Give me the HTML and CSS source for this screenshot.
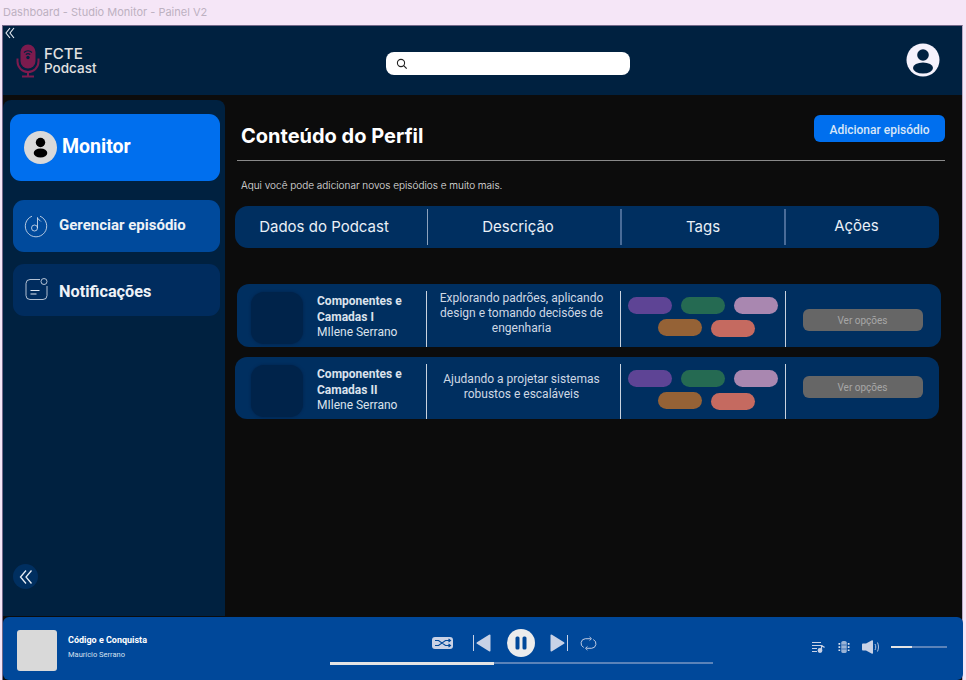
FILE: index.html
```html
<!DOCTYPE html>
<html lang="pt-BR">
<head>
<meta charset="utf-8">
<title>Dashboard - Studio Monitor - Painel V2</title>
<link rel="stylesheet" href="styles.css">
</head>
<body>
<div class="titlebar">Dashboard - Studio Monitor - Painel V2</div>
<div class="app">
  <svg class="corner-back" width="10" height="12" viewBox="0 0 10 12"><path d="M5 1 1 6l4 5M9 1 5 6l4 5" fill="none" stroke="#e8eef5" stroke-width="1.1"/></svg>
  <header class="header">
    <div class="logo">
      <svg width="24" height="34" viewBox="0 0 24 34">
        <rect x="4.500" y="0.500" width="15" height="24" rx="7.500" fill="#7c1b4e"/>
        <path d="M8 8.500a5.600 5.600 0 0 1 8 0M9.800 10.700a3.200 3.200 0 0 1 4.400 0" fill="none" stroke="#002140" stroke-width="1.100"/>
        <circle cx="12" cy="13.500" r="1.700" fill="#002140"/>
        <path d="M1.500 14.500v3a10.500 10.500 0 0 0 21 0v-3M12 28v4M6 32.500h12" fill="none" stroke="#7c1b4e" stroke-width="2"/>
      </svg>
      <div class="logo-text"><span class="logo-a">FCTE</span><span class="logo-b">Podcast</span></div>
    </div>
    <div class="search">
      <svg width="12" height="12" viewBox="0 0 12 12"><circle cx="5" cy="5" r="3.600" fill="none" stroke="#222" stroke-width="1.100"/><path d="m7.700 7.700 3 3" stroke="#222" stroke-width="1.200"/></svg>
    </div>
    <svg class="avatar" width="34" height="34" viewBox="0 0 34 34">
      <circle cx="17" cy="17" r="16.500" fill="#f5f2fc"/>
      <circle cx="17" cy="12" r="5.800" fill="#002140"/>
      <ellipse cx="17" cy="25" rx="10" ry="5.500" fill="#002140"/>
    </svg>
  </header>
  <div class="body">
    <aside class="sidebar">
      <div class="monitor">
        <svg width="33" height="33" viewBox="0 0 33 33">
          <circle cx="16.500" cy="16.500" r="16.500" fill="#d9d9d9"/>
          <circle cx="16.500" cy="11.500" r="4.700" fill="#000"/>
          <ellipse cx="16.500" cy="22" rx="6.800" ry="4.500" fill="#000"/>
        </svg>
        <span class="monitor-name">Monitor</span>
      </div>
      <nav class="nav">
        <div class="nav-item nav-active">
          <svg width="24" height="24" viewBox="0 0 24 24" fill="none" stroke="#dfe6f0" stroke-width="0.800">
            <path d="M8 2.200A10.700 10.700 0 1 0 16 2.200"/>
            <circle cx="10.500" cy="14" r="3"/>
            <path d="M13.500 14V3.500c0 2 2.500 2.500 3.500 4"/>
          </svg>
          <span class="nav-label">Gerenciar episódio</span>
        </div>
        <div class="nav-item nav-notif">
          <svg width="24" height="24" viewBox="0 0 24 24" fill="none" stroke="#dfe6f0" stroke-width="0.800">
            <path d="M16 2.500H6a4 4 0 0 0-4 4v12a4 4 0 0 0 4 4h13a4 4 0 0 0 4-4V9"/>
            <circle cx="20" cy="4.500" r="3"/>
            <path d="M6.500 13.500h9M6.500 17h6" stroke-width="1"/>
          </svg>
          <span class="nav-label">Notificações</span>
        </div>
      </nav>
      <div class="collapse">
        <svg width="14" height="16" viewBox="0 0 14 16"><path d="M7 1.500 1.500 8 7 14.500M12.500 1.500 7 8l5.500 6.500" fill="none" stroke="#e8eef5" stroke-width="1.300"/></svg>
      </div>
    </aside>
    <main class="main">
      <div class="title-row">
        <h1>Conteúdo do Perfil</h1>
        <button class="add">Adicionar episódio</button>
      </div>
      <p class="hint">Aqui você pode adicionar novos episódios e muito mais.</p>
      <div class="thead">
        <div class="th th-data">Dados do Podcast</div>
        <div class="th th-desc">Descrição</div>
        <div class="th th-tags">Tags</div>
        <div class="th th-acts">Ações</div>
      </div>
      <div class="row row-one">
        <div class="cell-info">
          <div class="thumb"></div>
          <div class="info"><b>Componentes e Camadas I</b><span>MIlene Serrano</span></div>
        </div>
        <div class="cell-desc">Explorando padrões, aplicando design e tomando decisões de engenharia</div>
        <div class="cell-tags">
          <i class="tag t-purple"></i><i class="tag t-green"></i><i class="tag t-lilac"></i><i class="tag t-brown"></i><i class="tag t-red"></i>
        </div>
        <div class="cell-act"><button class="opts">Ver opções</button></div>
      </div>
      <div class="row row-two">
        <div class="cell-info">
          <div class="thumb"></div>
          <div class="info"><b>Componentes e Camadas II</b><span>MIlene Serrano</span></div>
        </div>
        <div class="cell-desc">Ajudando a projetar sistemas robustos e escaláveis</div>
        <div class="cell-tags">
          <i class="tag t-purple"></i><i class="tag t-green"></i><i class="tag t-lilac"></i><i class="tag t-brown"></i><i class="tag t-red"></i>
        </div>
        <div class="cell-act"><button class="opts">Ver opções</button></div>
      </div>
    </main>
  </div>
  <footer class="player">
    <div class="track">
      <div class="cover"></div>
      <div class="track-text"><b>Código e Conquista</b><span>Maurício Serrano</span></div>
    </div>
    <div class="center">
      <div class="controls">
        <svg width="21" height="12" viewBox="0 0 21 12"><rect width="21" height="12" rx="3" fill="#c9d2e6"/><path d="M3 3.500h3.500l7 5H18M3 8.500h3.500l7-5H18M16.500 2 18.500 3.500 16.500 5M16.500 7 18.500 8.500 16.500 10" fill="none" stroke="#00489a" stroke-width="1.100"/></svg>
        <svg width="18" height="18" viewBox="0 0 18 18"><path d="M.5 1v16" stroke="#c9d2e6" stroke-width="1"/><path d="M17.500 1.500v15a1 1 0 0 1-1.500.8L4 9.800a1 1 0 0 1 0-1.600L16 .7a1 1 0 0 1 1.500.8Z" fill="#c9d2e6"/></svg>
        <svg width="28" height="28" viewBox="0 0 28 28"><circle cx="14" cy="14" r="14" fill="#ececec"/><rect x="8.500" y="7.500" width="4" height="13" rx="1.500" fill="#00489a"/><rect x="15.500" y="7.500" width="4" height="13" rx="1.500" fill="#00489a"/></svg>
        <svg width="18" height="18" viewBox="0 0 18 18"><path d="M17.500 1v16" stroke="#c9d2e6" stroke-width="1"/><path d="M.5 1.500v15a1 1 0 0 0 1.500.8l12-7.500a1 1 0 0 0 0-1.600L2 .7A1 1 0 0 0 .5 1.500Z" fill="#c9d2e6"/></svg>
        <svg width="17" height="15" viewBox="0 0 16 14" fill="none" stroke="#c9d2e6" stroke-width="0.900"><path d="M10 2.500H5a4.300 4.300 0 0 0-1.500 8.200M6 11.500h5a4.300 4.300 0 0 0 1.500-8.200"/><path d="M9 .8l1.800 1.700L9 4.200M7 9.800l-1.800 1.700L7 13.200"/></svg>
      </div>
      <div class="progress"><div class="progress-fill"></div></div>
    </div>
    <div class="extras">
      <svg width="13" height="12" viewBox="0 0 13 12" fill="none" stroke="#c9d2e6" stroke-width="1.200"><path d="M0 1.500h9M0 4.500h9M0 7.500h5M0 10.500h5"/><circle cx="8" cy="9.500" r="1.800" fill="#c9d2e6"/><path d="M9.500 9.500V4c0 1 2 1.500 3 2.500"/></svg>
      <svg width="12" height="14" viewBox="0 0 12 14" fill="#dbe2f0"><rect x="3.500" y="1" width="5" height="12" rx="1.500"/><path d="M5 1v12M7 1v12M3.500 5h5M3.500 9h5" stroke="#00489a" stroke-width="0.600"/><path d="M.5 3h1.700v1.700H.5zM.5 6.200h1.700v1.700H.5zM.5 9.400h1.700v1.700H.5zM9.800 3h1.700v1.700H9.800zM9.800 6.200h1.700v1.700H9.800zM9.800 9.400h1.700v1.700H9.800z"/></svg>
      <svg width="18" height="14" viewBox="0 0 18 14"><path d="M0 4.500C0 4 .5 3.500 1 3.500h3L10 .3c.5-.3 1 0 1 .7v12c0 .7-.5 1-1 .7L4 10.500H1c-.5 0-1-.5-1-1Z" fill="#c9d2e6"/><path d="M13 4c1 2 1 4 0 6M15.500 2.500c1.300 3 1.300 6 0 9" fill="none" stroke="#c9d2e6" stroke-width="0.900"/></svg>
      <div class="volume"><div class="volume-fill"></div></div>
    </div>
  </footer>
</div>
</body>
</html>
```

FILE: styles.css
```css
* { box-sizing: border-box; }
html, body { margin: 0; padding: 0; }
body {
  width: 966px;
  height: 680px;
  overflow: hidden;
  background: #f5e6f7;
  font-family: "Inter", "Liberation Sans", sans-serif;
}
svg { display: block; flex: none; }
.titlebar {
  height: 25px;
  padding: 5px 0 0 3px;
  font-size: 11px;
  line-height: 14px;
  color: #bdb1c1;
}
.app {
  position: relative;
  width: 961px;
  height: 655px;
  margin-left: 2px;
  border-left: 1px solid #74698a;
  border-top: 1px solid #74698a;
  border-right: 1px solid #b9a8c4;
  display: flex;
  flex-direction: column;
  background: #0c0c0c;
}
.corner-back { position: absolute; left: 2px; top: 1px; }
.header {
  height: 69px;
  flex: none;
  background: #002140;
  display: flex;
  align-items: center;
  padding: 0 22px 0 13px;
}
.logo { display: flex; align-items: center; gap: 4px; width: 370px; }
.logo-text { display: flex; flex-direction: column; color: #e2e2e2; font-weight: 500; }
.logo-a { font-size: 15px; line-height: 15px; }
.logo-b { font-size: 13.500px; line-height: 14px; }
.search {
  width: 244px;
  height: 23px;
  margin-top: 6px;
  background: #fff;
  border-radius: 8px;
  display: flex;
  align-items: center;
  padding-left: 10px;
}
.avatar { margin-left: auto; margin-top: -1px; }
.body { flex: 1; display: flex; min-height: 0; }
.sidebar {
  width: 222px;
  flex: none;
  margin-top: 5px;
  margin-bottom: 1px;
  background: #002140;
  border-radius: 8px 8px 0 0;
  padding: 14px 5px 0 7px;
  display: flex;
  flex-direction: column;
}
.monitor {
  height: 67px;
  background: #006fee;
  border-radius: 11px;
  display: flex;
  align-items: center;
  padding-left: 14px;
  gap: 5px;
  color: #fff;
  font-family: "Roboto", sans-serif;
  font-weight: 700;
  font-size: 19.500px;
}
.monitor-name { padding-bottom: 2px; }
.nav { display: flex; flex-direction: column; gap: 12px; margin: 19px 0 0 3px; }
.nav-item {
  height: 52px;
  background: #002c5e;
  border-radius: 11px;
  display: flex;
  align-items: center;
  gap: 11px;
  padding: 0 0 0 11px;
  color: #eef2f7;
  font-family: "Roboto", sans-serif;
  font-weight: 700;
  font-size: 15px;
}
.nav-active { background: #004a9c; }
.nav-active .nav-label { padding-bottom: 2px; }
.nav-notif { font-size: 16.300px; }
.nav-notif .nav-label { padding-top: 2px; }
.nav-notif svg { margin-bottom: 3px; }
.collapse {
  width: 25px;
  height: 25px;
  margin: auto 0 27px 3px;
  border-radius: 50%;
  background: #002f60;
  display: flex;
  align-items: center;
  justify-content: center;
}
.main { flex: 1; min-width: 0; padding: 20px 0 0 10px; color: #fff; }
.title-row {
  width: 708px;
  margin-left: 2px;
  height: 46px;
  border-bottom: 1px solid #8a8a8a;
  display: flex;
  justify-content: space-between;
  align-items: flex-start;
  padding-left: 4px;
}
h1 { margin: 9px 0 0; font-size: 20px; line-height: 24px; font-weight: 700; color: #fff; }
.add {
  width: 131px;
  height: 27px;
  border: 0;
  border-radius: 6px;
  background: #006fee;
  color: #d8e6f7;
  font-family: "Roboto", sans-serif;
  font-weight: 500;
  font-size: 12px;
  padding: 3px 0 0;
}
.hint { margin: 18px 0 14px 6px; font-size: 10px; line-height: 13px; color: #e4e4e4; font-weight: 300; }
.thead {
  width: 704px;
  height: 42px;
  border-radius: 13px;
  background: #002f60;
  display: grid;
  grid-template-columns: 193px 194px 164px 153px;
  padding: 3px 0;
  margin-bottom: 36px;
}
.th {
  display: flex;
  align-items: center;
  justify-content: center;
  font-size: 15px;
  color: #eaf0f7;
  padding-bottom: 1px;
}
.th-data { border-right: 1px solid #8ca2bd; padding-right: 14px; }
.th-desc { border-right: 2px solid #4a6c98; padding-right: 12px; }
.th-tags { border-right: 2px solid #4a6c98; }
.th-acts { padding: 0 12px 3px 0; }
.row {
  display: grid;
  width: 704px;
  background: #002f60;
  border-radius: 12px;
  padding-top: 7px;
  overflow: hidden;
}
.row-one { margin-left: 2px; height: 63px; grid-template-columns: 190px 194px 165px 155px; }
.row-two { margin-top: 10px; height: 62px; grid-template-columns: 192px 194px 165px 153px; }
.row > div { border-right: 1px solid #c9d3df; }
.row > div:last-child { border-right: 0; }
.cell-info { display: flex; gap: 14px; padding-left: 14px; }
.row-two .cell-info { padding-left: 16px; }
.thumb {
  width: 52px;
  height: 52px;
  margin-top: 1px;
  flex: none;
  background: #00234a;
  border-radius: 13px;
  box-shadow: 0 0 3px #00234a;
}
.info { display: flex; flex-direction: column; font-family: "Roboto", sans-serif; font-size: 12px; line-height: 15.500px; color: #dbe2ec; padding-top: 3px; width: 95px; }
.info b { font-weight: 700; }
.cell-desc {
  text-align: center;
  font-family: "Roboto", sans-serif;
  font-size: 12px;
  line-height: 15px;
  color: #cfd8e4;
  padding: 0 7px 0 3px;
}
.row-two .cell-desc { padding: 8px 12px 0 8px; }
.cell-tags {
  display: flex;
  flex-wrap: wrap;
  justify-content: center;
  gap: 5px 9px;
  padding: 6px 7px 0;
  align-content: flex-start;
}
.tag { display: block; width: 44px; height: 17px; border-radius: 9px; }
.t-purple { background: #5e4495; }
.t-green { background: #256a52; }
.t-lilac { background: #a987b0; }
.t-brown { background: #956236; margin-left: 7px; }
.t-red { background: #c56a60; margin-top: 1px; }
.cell-act { display: flex; justify-content: center; padding: 18px 2px 0 0; }
.row-two .cell-act { padding: 12px 0 0 0; }
.opts {
  width: 120px;
  height: 22px;
  border: 0;
  border-radius: 6px;
  background: #666;
  color: #a6a6a6;
  font-family: "Roboto", sans-serif;
  font-size: 10px;
  padding: 0;
}
.player {
  height: 63px;
  flex: none;
  background: #00489a;
  border-radius: 6px;
  display: flex;
  align-items: flex-start;
  padding-left: 14px;
  margin-right: -1px;
}
.track { width: 313px; display: flex; gap: 11px; padding-top: 13px; color: #fff; font-family: "Roboto", sans-serif; }
.cover { width: 40px; height: 41px; background: #d9d9d9; border-radius: 3px; flex: none; }
.track-text { display: flex; flex-direction: column; padding-top: 4px; }
.track-text b { font-size: 9px; line-height: 12px; font-weight: 700; }
.track-text span { font-size: 7.500px; line-height: 10px; margin-top: 4px; color: #d5e0f0; }
.center { width: 383px; padding-top: 12px; }
.controls { display: flex; align-items: center; padding-left: 102px; gap: 20px; height: 28px; }
.controls svg:nth-child(3) { margin: 0 -5px 0 -4px; }
.controls svg:nth-child(5) { margin-left: -8px; }
.progress { height: 2px; margin-top: 5px; background: #5b83b9; }
.progress-fill { width: 164px; height: 3px; background: #e4e4e4; }
.extras { display: flex; align-items: center; gap: 14px; margin-left: 99px; height: 14px; margin-top: 23px; }
.extras svg:nth-child(2) { margin-left: -1px; }
.extras svg:nth-child(3) { margin-left: -2px; }
.volume { width: 56px; height: 2px; margin-left: -3px; background: #5b83b9; }
.volume-fill { width: 21px; height: 2px; background: #e4e4e4; }
```
